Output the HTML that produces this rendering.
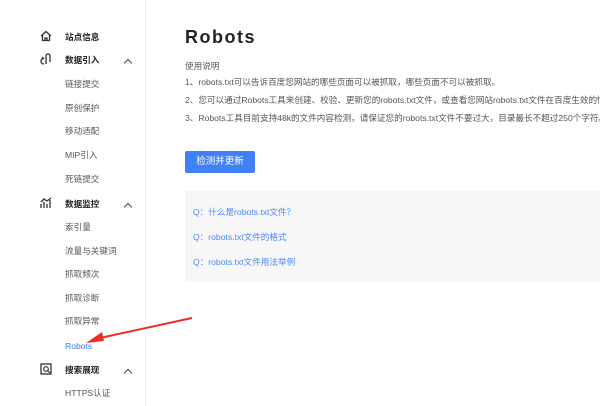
<!DOCTYPE html>
<html><head><meta charset="utf-8"><style>
*{margin:0;padding:0;box-sizing:border-box}
html,body{width:600px;height:406px;overflow:hidden}
body{background:#fff;font-family:"Liberation Sans","Noto Sans CJK SC",sans-serif;position:relative}
.sb{position:absolute;left:0;top:0;width:146px;height:406px;border-right:1px solid #eee}
.it{position:absolute;left:65px;font-size:8.6px;color:#555;line-height:12px;white-space:nowrap}
.h{font-weight:bold;color:#222}
.ch{position:absolute;left:125px;width:6px;height:6px;border-left:1.3px solid #444;border-top:1.3px solid #444;transform:rotate(45deg)}
.ic{position:absolute;left:40px}
.clip{position:absolute;left:0;top:0;width:600px;height:406px;overflow:hidden}
.m{position:absolute;left:185px}
.t{font-size:8.6px;color:#555;white-space:nowrap;line-height:12px}
.q{position:absolute;left:193px;font-size:8.6px;color:#4e86f7;white-space:nowrap;line-height:12px}
</style></head><body>
<div class="sb">
<svg class="ic" style="top:30px" width="12" height="12" viewBox="0 0 12 12"><path d="M1 6 L6 1.5 L11 6 M2.5 5 V10.5 H9.5 V5 M5 10.5 V8 H7 V10.5" fill="none" stroke="#333" stroke-width="1.3"/></svg>
<div class="it h" style="top:31px">站点信息</div>
<svg class="ic" style="top:53px" width="12" height="13" viewBox="0 0 12 13"><path d="M6 11 V3 Q6 1 8 1 Q10 1 10 3 V9 M3 6 Q1 6 1 8 Q1 11 4 11 M2 4 L4 6" fill="none" stroke="#333" stroke-width="1.3"/></svg>
<div class="it h" style="top:54px">数据引入</div><div class="ch" style="top:60px"></div>
<div class="it" style="top:78px">链接提交</div>
<div class="it" style="top:102px">原创保护</div>
<div class="it" style="top:125px">移动适配</div>
<div class="it" style="top:149px">MIP引入</div>
<div class="it" style="top:173px">死链提交</div>
<svg class="ic" style="top:197px" width="13" height="12" viewBox="0 0 13 12"><path d="M1 11 V7 M4 11 V5 M7 11 V7 M10 11 V3 M1 5 L4 2 L7 4 L11 1" fill="none" stroke="#333" stroke-width="1.3"/></svg>
<div class="it h" style="top:198px">数据监控</div><div class="ch" style="top:204px"></div>
<div class="it" style="top:221px">索引量</div>
<div class="it" style="top:245px">流量与关键词</div>
<div class="it" style="top:268px">抓取频次</div>
<div class="it" style="top:292px">抓取诊断</div>
<div class="it" style="top:315px">抓取异常</div>
<div class="it" style="top:340px;color:#3b7af5">Robots</div>
<svg class="ic" style="top:363px" width="12" height="12" viewBox="0 0 12 12"><rect x="1" y="1" width="10" height="10" fill="none" stroke="#333" stroke-width="1.3"/><circle cx="6" cy="6" r="2.3" fill="none" stroke="#333" stroke-width="1.2"/><path d="M7.6 7.6 L10 10" stroke="#333" stroke-width="1.2"/></svg>
<div class="it h" style="top:364px">搜索展现</div><div class="ch" style="top:370px"></div>
<div class="it" style="top:387px">HTTPS认证</div>
</div>
<div class="clip">
<div class="m" style="top:27px;font-size:18px;font-weight:bold;color:#222;letter-spacing:1.5px">Robots</div>
<div class="m t" style="top:60px">使用说明</div>
<div class="m t" style="top:76px">1、robots.txt可以告诉百度您网站的哪些页面可以被抓取，哪些页面不可以被抓取。</div>
<div class="m t" style="top:94px">2、您可以通过Robots工具来创建、校验、更新您的robots.txt文件，或查看您网站robots.txt文件在百度生效的情况。</div>
<div class="m t" style="top:112px">3、Robots工具目前支持48k的文件内容检测，请保证您的robots.txt文件不要过大，目录最长不超过250个字符。</div>
<div class="m" style="top:151px;width:70px;height:22px;background:#3f80f6;border-radius:2px;color:#fff;font-size:9.5px;line-height:22px;text-align:center">检测并更新</div>
<div class="m" style="top:191px;width:415px;height:91px;background:#f7f7f7"></div>
<div class="q" style="top:206px">Q：什么是robots.txt文件？</div>
<div class="q" style="top:231px">Q：robots.txt文件的格式</div>
<div class="q" style="top:256px">Q：robots.txt文件用法举例</div>
</div>
<svg style="position:absolute;left:0;top:0" width="600" height="406"><path d="M192 318 L100 338" stroke="#e8302a" stroke-width="2"/><polygon points="86,343 102,332 104,341" fill="#e8302a"/></svg>
</body></html>
